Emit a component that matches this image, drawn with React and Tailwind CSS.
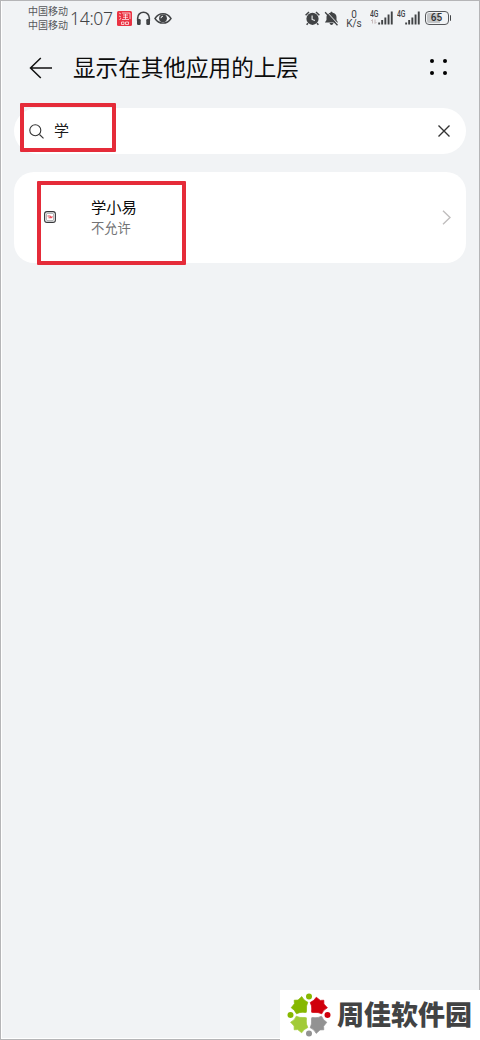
const apps = [{ name: "学小易", status: "不允许" }];

const petals = [
  { color: "#86b800", rotate: -90 },
  { color: "#d0000b", rotate: 0 },
  { color: "#929292", rotate: 90 },
  { color: "#a2cb38", rotate: 180 },
];

const dots = [
  { cx: 0, cy: -18.5, color: "#86b800" },
  { cx: 18.5, cy: 0, color: "#d0000b" },
  { cx: 0, cy: 18.5, color: "#929292" },
  { cx: -18.5, cy: 0, color: "#86b800" },
];

function AppBadge() {
  return (
    <svg className="ml-[4px] h-[15px] w-[15px]" viewBox="0 0 15 15" fill="none">
      <rect width="15" height="15" rx="1.5" fill="#ea3343" />
      <path
        d="M2 2l2 1M2 5l2 1M2.5 9L4 7M5 2h8v6M6 4h5M6 6.3h5M8.5 3v5M5 8.5h7M4.5 11h2.5v2.5h-2.5zM8.5 11h3v2.5h-3z"
        stroke="#fff"
        strokeOpacity="0.7"
        strokeWidth="1"
      />
    </svg>
  );
}

function Headphones() {
  return (
    <svg className="ml-[4px] h-[15px] w-[15px]" viewBox="0 0 15 15" fill="none">
      <path d="M1.7 10V7a5.8 5.8 0 0 1 11.6 0v3" stroke="#414345" strokeWidth="1.6" />
      <rect x="1" y="8" width="3.7" height="6" rx="1.2" fill="#414345" />
      <rect x="10.3" y="8" width="3.7" height="6" rx="1.2" fill="#414345" />
    </svg>
  );
}

function Eye() {
  return (
    <svg className="ml-[3px] h-[13px] w-[18px]" viewBox="0 0 18 13" fill="none">
      <path d="M1 6.5C5 .2 13 .2 17 6.5c-4 6.2-12 6.2-16 0Z" stroke="#414345" strokeWidth="1.4" />
      <circle cx="9" cy="6.3" r="3.9" fill="#414345" />
      <path d="M9 4.2a2 2 0 0 0-2 2" stroke="#f1f3f5" strokeWidth="1" />
    </svg>
  );
}

function AlarmClock() {
  return (
    <svg className="h-[15px] w-[15px]" viewBox="0 0 15 15" fill="none">
      <path d="M.6 4.2 4 1M14.4 4.2 11 1M3 12.3l-1.4 1.5M12 12.3l1.4 1.5" stroke="#414345" strokeWidth="1.5" />
      <circle cx="7.5" cy="7.8" r="6.1" fill="#414345" />
      <path d="M7.1 4.6v3.8l2.8 1.2" stroke="#f1f3f5" strokeWidth="1.1" />
    </svg>
  );
}

function BellOff() {
  return (
    <svg className="ml-[4px] h-[15px] w-[15px]" viewBox="0 0 15 15" fill="none">
      <path
        d="M7.5.8c.7 0 1 .4 1 1 2.6.5 4 2 4 4.2v3l1.6 2.4H.9L2.5 9V6c0-2.2 1.4-3.7 4-4.2 0-.6.3-1 1-1ZM5.6 12h3.8c0 1.1-.8 1.9-1.9 1.9s-1.9-.8-1.9-1.9Z"
        fill="#414345"
      />
      <path d="M2.2.3 14.4 13.4" stroke="#f1f3f5" strokeWidth="1" />
      <path d="M1.1 1.2 13.5 14.2" stroke="#414345" strokeWidth="1.3" />
    </svg>
  );
}

function Signal({ traffic }) {
  return (
    <svg className="h-[16px] w-[23px]" viewBox="0 0 23 16">
      <text
        x="0"
        y="7"
        fontSize="8.5"
        fontWeight="500"
        fill="#414345"
        textLength="8.5"
        lengthAdjust="spacingAndGlyphs"
      >
        4G
      </text>
      {traffic && (
        <path d="M2.5 9.5v4M1 11 2.5 9.5M5 9.5v4M6.5 12 5 13.5" fill="none" stroke="#c9bcbd" strokeWidth="1" />
      )}
      <g fill="#414345">
        <rect x="8.2" y="12.5" width="1.9" height="2" />
        <rect x="11.2" y="10" width="1.9" height="4.5" />
        <rect x="14.4" y="7.5" width="1.9" height="7" />
        <rect x="17.6" y="4.5" width="1.9" height="10" />
        <rect x="20.8" y="1.5" width="1.9" height="13" />
      </g>
    </svg>
  );
}

function Battery() {
  return (
    <div className="ml-[5px] flex items-center gap-[1px]">
      <div className="flex h-[14px] w-[24px] rounded-[4px] border border-[#55575a] p-[1px]">
        <div className="flex w-full items-center justify-center rounded-[2px] bg-linear-to-r from-[#c3c5c7] from-65% to-[#f1f3f5] to-65% font-['Roboto',sans-serif] text-[10px] font-medium leading-none text-[#303234]">
          65
        </div>
      </div>
      <div className="h-[6px] w-[1.5px] rounded-r bg-[#414345]" />
    </div>
  );
}

function StatusBar() {
  return (
    <div className="flex h-[34px] items-center justify-between pl-[26px] pr-[28px] text-[#414345]">
      <div className="flex items-center">
        <div className="text-[10px] leading-[14px] text-[#55575a]">
          <p>中国移动</p>
          <p>中国移动</p>
        </div>
        <span className="ml-[2px] mt-[2px] w-[43px] whitespace-nowrap font-['Noto_Sans','Open_Sans',sans-serif] text-[17.5px] font-light leading-none tracking-[-0.3px]">
          14:07
        </span>
        <AppBadge />
        <Headphones />
        <Eye />
      </div>
      <div className="flex items-center">
        <AlarmClock />
        <BellOff />
        <div className="ml-[7px] mt-px w-[17px] text-center font-['Roboto',sans-serif] text-[10px] leading-[9px]">
          <p>0</p>
          <p>K/s</p>
        </div>
        <div className="ml-[7px] flex gap-[4px] font-['Roboto',sans-serif]">
          <Signal traffic />
          <Signal />
        </div>
        <Battery />
      </div>
    </div>
  );
}

function Header() {
  return (
    <header className="flex h-[65px] items-center pl-[27px] pr-[32px]">
      <svg className="h-[22px] w-[24px]" viewBox="0 0 24 22" fill="none" stroke="#111" strokeWidth="1.5">
        <path d="M11.8 1 1.5 11l10.3 10M1.5 11H23" />
      </svg>
      <h1 className="ml-[20px] text-[22.6px] leading-none text-[#0c0c0c]">显示在其他应用的上层</h1>
      <div className="-mt-[2px] ml-auto grid grid-cols-2 gap-x-[9px] gap-y-[8px]">
        <span className="h-[4px] w-[4px] rounded-full bg-black" />
        <span className="h-[4px] w-[4px] rounded-full bg-black" />
        <span className="h-[4px] w-[4px] rounded-full bg-black" />
        <span className="h-[4px] w-[4px] rounded-full bg-black" />
      </div>
    </header>
  );
}

function SearchBar() {
  return (
    <div className="relative ml-[12px] mr-[13px] mt-[8px] flex h-[46px] items-center rounded-full bg-white pl-[15px] pr-[16px]">
      <svg className="h-[15px] w-[15px]" viewBox="0 0 15 15" fill="none" stroke="#333" strokeWidth="1.1">
        <circle cx="6.3" cy="6.3" r="5.5" />
        <path d="m10.5 10.5 4 3.8" />
      </svg>
      <span className="-mt-[4px] ml-[10px] text-[15px] leading-none text-[#1a1a1a]">学</span>
      <svg className="ml-auto h-[12px] w-[12px]" viewBox="0 0 12 12" fill="none" stroke="#333" strokeWidth="1.4">
        <path d="m.5.5 11 11M11.5.5l-11 11" />
      </svg>
      <div className="absolute -top-[5px] left-[6px] h-[49px] w-[96px] rounded-[1px] border-4 border-[#e52b39]" />
    </div>
  );
}

function AppRow({ app }) {
  return (
    <div className="relative ml-[12px] mr-[13px] mt-[18px] flex h-[91px] items-center rounded-[20px] bg-white pl-[30px] pr-[15px]">
      <svg className="-mt-[1px] h-[12px] w-[12px]" viewBox="0 0 12 12" fill="none">
        <rect x=".6" y=".6" width="10.8" height="10.8" rx="2.4" stroke="#37383b" strokeWidth="1.1" />
        <rect x="2.3" y="2.3" width="7.4" height="7.4" rx="1.5" stroke="#8b8d90" strokeWidth=".8" />
        <path d="M3.5 5h2.5l1.2 1.6L8.5 5.5M4.5 6.8h2.5" stroke="#ed4b58" strokeWidth="1.1" />
      </svg>
      <div className="-mt-[2px] ml-[35px]">
        <p className="text-[15.3px] leading-[22px] text-[#0c0c0c]">{app.name}</p>
        <p className="text-[13.3px] leading-[22px] text-[#737476]">{app.status}</p>
      </div>
      <svg className="ml-auto h-[15px] w-[9px]" viewBox="0 0 9 15" fill="none" stroke="#c0bebe" strokeWidth="1.4">
        <path d="m1 .8 7 6.7-7 6.7" />
      </svg>
      <div className="absolute left-[23px] top-[9px] h-[84px] w-[149px] rounded-[1px] border-4 border-[#e52b39]" />
    </div>
  );
}

function Watermark() {
  return (
    <div className="absolute bottom-0 right-0 flex h-[50px] w-[200px] items-center bg-white pl-[7px]">
      <svg className="h-[44px] w-[44px]" viewBox="-22 -22 44 44">
        {petals.map((petal) => (
          <path
            key={petal.rotate}
            d="M1.2-12.5Q5-14 7.3-17.8L11.3-14.6 14.8-14.8 14.9-11 18.4-7.2Q14-5 12.8-1.2 9-3 5-2.5 3-2.4 2.6-2.8 2.4-3 2.7-6 3-9 1.2-12.5Z"
            fill={petal.color}
            stroke={petal.color}
            strokeWidth="0.7"
            strokeLinejoin="round"
            transform={`rotate(${petal.rotate})`}
          />
        ))}
        {dots.map((dot) => (
          <circle key={`${dot.cx},${dot.cy}`} cx={dot.cx} cy={dot.cy} r="3" fill={dot.color} />
        ))}
      </svg>
      <span className="-mt-[4px] ml-[6px] whitespace-nowrap text-[27px] font-black leading-none text-[#424344]">
        周佳软件园
      </span>
    </div>
  );
}

export default function App() {
  return (
    <div className="relative h-[1040px] w-[480px] bg-[#f1f3f5] font-['Noto_Sans_CJK_SC',sans-serif]">
      <main className="h-full border border-[#b5b5b7]">
        <div className="h-full border-b border-l border-white">
          <StatusBar />
          <Header />
          <SearchBar />
          {apps.map((app) => (
            <AppRow key={app.name} app={app} />
          ))}
        </div>
      </main>
      <Watermark />
    </div>
  );
}
